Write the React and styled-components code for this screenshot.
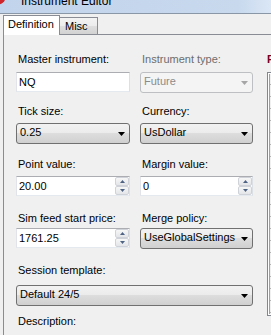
import React from 'react';
import styled, { createGlobalStyle } from 'styled-components';

const Global = createGlobalStyle`
  html, body { margin: 0; padding: 0; background: #f0f0f0; }
  body {
    width: 271px; height: 335px; overflow: hidden;
    font-family: "Liberation Sans", Arial, sans-serif; font-size: 11px; color: #000;
  }
`;

const Window = styled.div`
  width: 271px; height: 335px; overflow: hidden;
  display: flex; flex-direction: column; background: #f0f0f0;
`;

const TitleBar = styled.div`
  flex: none; height: 13px; overflow: hidden;
  display: flex; align-items: flex-start;
  background: linear-gradient(90deg, #c2d4eb 0%, #c8d9ee 88%, #dbe7f5 100%);
  border-bottom: 1px solid #8a97a6;
`;

const AppIcon = styled.svg`
  flex: none; width: 16px; height: 16px; margin: -11px 0 0 -10px;
`;

const TitleText = styled.span`
  margin: -6px 0 0 15px; font-size: 12px; line-height: 15px; color: #000; white-space: nowrap;
`;

const TabStrip = styled.div`
  flex: none; height: 21px; display: flex; align-items: flex-end; padding-left: 3px;
`;

const Tab = styled.div`
  box-sizing: border-box; white-space: nowrap;
  height: ${p => (p.$active ? 20 : 18)}px;
  width: ${p => (p.$active ? 57 : 38)}px;
  padding: 2px 0 0 ${p => (p.$active ? 4 : 5)}px;
  line-height: 13px;
  border: 1px solid #898c95;
  border-bottom: ${p => (p.$active ? 'none' : '1px solid #898c95')};
  border-left: ${p => (p.$active ? '1px solid #898c95' : 'none')};
  background: ${p => (p.$active ? '#ffffff' : 'linear-gradient(#f3f3f3 0%, #ececec 50%, #dedede 50%, #d2d2d2 100%)')};
`;

const StripFill = styled.div`
  flex: 1; height: 0; border-bottom: 1px solid #898c95; margin-bottom: 0;
`;

const Page = styled.div`
  flex: 1; display: flex; margin-left: 3px;
  border-left: 1px solid #898c95;
  padding: 18px 0 0 12px; background: #f0f0f0; min-height: 0;
`;

const Form = styled.div`
  flex: none; width: 237px; display: flex; flex-direction: column;
`;

const Row = styled.div`
  display: grid; grid-template-columns: 114px 113px; column-gap: 10px;
  align-items: start; margin-top: ${p => p.$top || 0}px;
  ${p => p.$wide && 'grid-template-columns: 237px;'}
`;

const Field = styled.div`
  display: flex; flex-direction: column;
`;

const Label = styled.div`
  line-height: 13px; padding-left: 2px; white-space: nowrap;
  color: ${p => (p.$disabled ? '#6d6d6d' : '#000')};
  margin-bottom: ${p => p.$gap || 0}px;
`;

const TextBox = styled.div`
  box-sizing: border-box; height: 20px; display: flex; align-items: center;
  border: 1px solid; border-color: #abadb3 #dbdfe6 #e3e9ef #e2e3ea;
  background: #fff; padding-left: 2px; line-height: 13px;
`;

const BoxText = styled.span`
  flex: 1; white-space: nowrap; overflow: hidden;
`;

const Spin = styled.div`
  flex: none; align-self: stretch; width: 14px; display: flex; flex-direction: column;
`;

const SpinBtn = styled.div`
  flex: 1; box-sizing: border-box; border: 1px solid #cfd3d9; border-radius: 2px;
  background: linear-gradient(#f7f7f7, #e3e5e8);
  display: flex; align-items: center; justify-content: center;
`;

const Combo = styled.div`
  box-sizing: border-box; height: 21px; display: flex; align-items: center;
  border: 1px solid ${p => (p.$disabled ? '#bdbfc2' : '#707070')}; border-radius: 3px;
  padding: 0 4px 0 3px; line-height: 13px;
  color: ${p => (p.$disabled ? '#8b8b8b' : '#000')};
  background: ${p => (p.$disabled ? '#f4f4f4' : 'linear-gradient(#f2f2f2 0%, #ebebeb 50%, #dddddd 50%, #d0d0d0 100%)')};
`;

const ComboText = styled.span`
  flex: 1; white-space: nowrap; overflow: hidden; padding-bottom: 2px;
`;

const Side = styled.div`
  flex: 1; margin-left: 14px; display: flex; flex-direction: column; min-width: 0;
`;

const SideLabel = styled.div`
  line-height: 13px; color: #7a0020; font-weight: bold; white-space: nowrap; padding-left: 0;
`;

const GridBox = styled.div`
  margin-top: 6px; height: 244px; box-sizing: border-box;
  border: 1px solid #828790; border-right: none;
  padding: 1px 0 1px 1px; display: flex; background: #fff;
`;

const GridInner = styled.div`
  flex: 1; border-left: 1px solid #a0a0a0; display: flex; flex-direction: column; overflow: hidden;
  background: #f0f0f0;
`;

const GridRow = styled.div`
  flex: none; height: ${p => (p.$first ? 10 : 11)}px; border-bottom: 1px solid #b4b4b4;
`;

const DropArrow = ({ disabled }) => (
  <svg width="7" height="4" viewBox="0 0 7 4" style={{ flex: 'none' }}>
    <path d="M0 0H7L3.5 4Z" fill={disabled ? '#a6a6a6' : '#000'} />
  </svg>
);

const SpinArrow = ({ up }) => (
  <svg width="5" height="3" viewBox="0 0 5 3">
    <path d={up ? 'M0 3H5L2.5 0Z' : 'M0 0H5L2.5 3Z'} fill="#4e6283" />
  </svg>
);

const Input = ({ value }) => (
  <TextBox><BoxText>{value}</BoxText></TextBox>
);

const Spinner = ({ value }) => (
  <TextBox>
    <BoxText>{value}</BoxText>
    <Spin>
      <SpinBtn><SpinArrow up /></SpinBtn>
      <SpinBtn><SpinArrow /></SpinBtn>
    </Spin>
  </TextBox>
);

const Select = ({ value, disabled }) => (
  <Combo $disabled={disabled}>
    <ComboText>{value}</ComboText>
    <DropArrow disabled={disabled} />
  </Combo>
);

export default function App() {
  const rows = Array.from({ length: 20 });
  return (
    <>
      <Global />
      <Window>
        <TitleBar>
          <AppIcon viewBox="0 0 16 16">
            <circle cx="8" cy="8" r="7.5" fill="#d0262b" />
            <path d="M4 5L8 12L12 5" stroke="#fff" strokeWidth="1.6" fill="none" />
          </AppIcon>
          <TitleText>Instrument Editor</TitleText>
        </TitleBar>
        <TabStrip>
          <Tab $active>Definition</Tab>
          <Tab>Misc</Tab>
          <StripFill />
        </TabStrip>
        <Page>
          <Form>
            <Row>
              <Field>
                <Label $gap={6}>Master instrument:</Label>
                <Input value="NQ" />
              </Field>
              <Field>
                <Label $gap={6} $disabled>Instrument type:</Label>
                <Select value="Future" disabled />
              </Field>
            </Row>
            <Row $top={12}>
              <Field>
                <Label $gap={5}>Tick size:</Label>
                <Select value="0.25" />
              </Field>
              <Field>
                <Label $gap={5}>Currency:</Label>
                <Select value="UsDollar" />
              </Field>
            </Row>
            <Row $top={14}>
              <Field>
                <Label $gap={5}>Point value:</Label>
                <Spinner value="20.00" />
              </Field>
              <Field>
                <Label $gap={5}>Margin value:</Label>
                <Spinner value="0" />
              </Field>
            </Row>
            <Row $top={16}>
              <Field>
                <Label $gap={3}>Sim feed start price:</Label>
                <Spinner value="1761.25" />
              </Field>
              <Field>
                <Label $gap={3}>Merge policy:</Label>
                <Select value="UseGlobalSettings" />
              </Field>
            </Row>
            <Row $top={15} $wide>
              <Field>
                <Label $gap={8}>Session template:</Label>
                <Select value="Default 24/5" />
              </Field>
            </Row>
            <Row $top={9} $wide>
              <Field>
                <Label>Description:</Label>
              </Field>
            </Row>
          </Form>
          <Side>
            <SideLabel>Rollovers</SideLabel>
            <GridBox>
              <GridInner>
                {rows.map((_, i) => <GridRow key={i} $first={i === 0} />)}
              </GridInner>
            </GridBox>
          </Side>
        </Page>
      </Window>
    </>
  );
}
